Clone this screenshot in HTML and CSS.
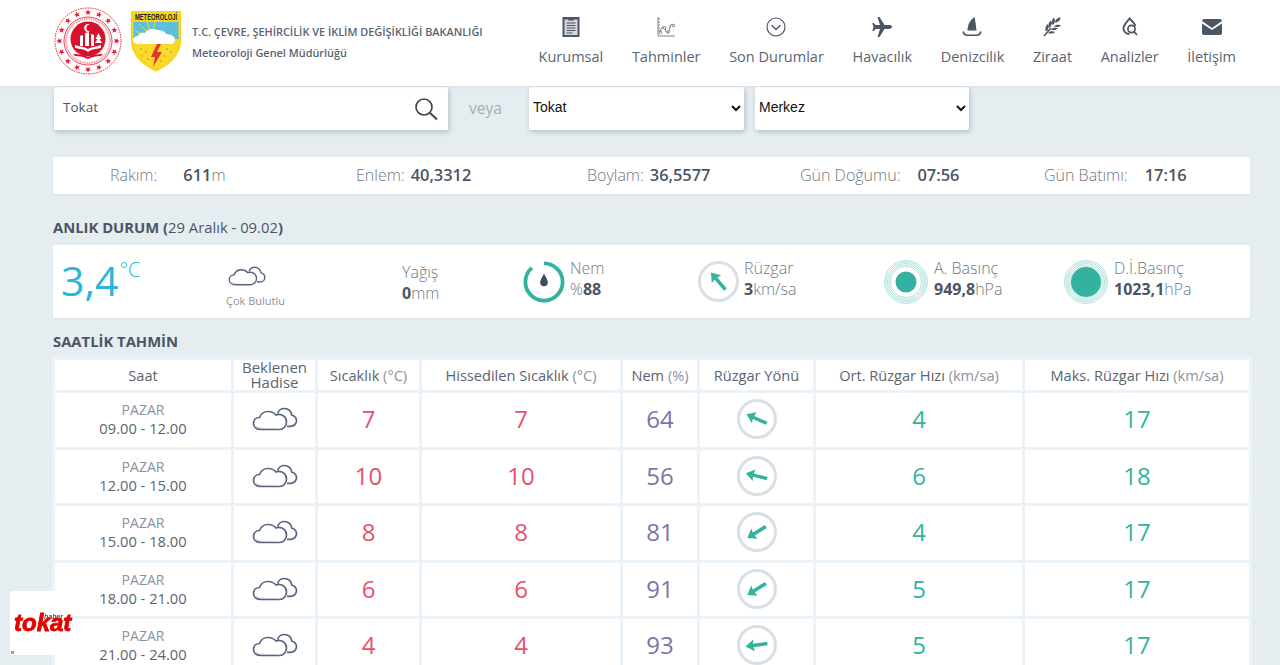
FILE: index.html
```html
<!DOCTYPE html>
<html lang="tr">
<head>
<meta charset="utf-8">
<title>Meteoroloji Genel Müdürlüğü</title>
<link rel="stylesheet" href="styles.css">
</head>
<body>
<svg class="defs" width="0" height="0" aria-hidden="true">
  <defs>
    <symbol id="cloud" viewBox="0 0 46 24">
      <path d="M3 18c4 2.500 12 3.500 20 3-.5 1-1 1.500-2 1.500H9c-3 0-5-2-6-4.500z" fill="#e4e6ec"/>
      <path d="M9 22.500C4.500 22.500 1.500 20 1.500 16.500S4 10.500 7.500 10.500C9 6.500 12.500 4.500 16 4.500c3 0 6 1.200 8 3.500 1-.5 2-.6 3-.6 4.500 0 7.500 3.500 7.500 7.600 0 4-3 7.500-7 7.500z" fill="none" stroke="#596580" stroke-width="1.700"/>
      <path d="M25.500 6.500C26.500 3.500 29 1.500 32.500 1.500c4 0 7 3 7.200 6.500 2.500.8 4.800 3 4.800 5.800 0 3.200-2.800 5.500-6 5.500h-3.500" fill="none" stroke="#596580" stroke-width="1.700"/>
    </symbol>
    <symbol id="wind" viewBox="0 0 40 40">
      <circle cx="20" cy="20" r="18.500" fill="#fff" stroke="#d8dfe5" stroke-width="3"/>
    </symbol>
    <polygon id="star" points="0,-3.200 .9,-1 3.100,-1 1.300,.4 2,2.600 0,1.300 -2,2.600 -1.300,.4 -3.100,-1 -.9,-1" fill="#e01b34"/>
    <g id="arrow" fill="#33b39f">
      <polygon points="0,-11.500 6,-3 1.700,-3.800 1.700,10.500 -1.700,10.500 -1.700,-3.800 -6,-3"/>
    </g>
    <g id="rings" fill="none" stroke="#33b39f" stroke-width=".5" stroke-opacity=".7">
      <circle cx="22" cy="22" r="21.500"/>
      <circle cx="22" cy="22" r="20"/>
      <circle cx="22" cy="22" r="18.500"/>
      <circle cx="22" cy="22" r="17"/>
      <circle cx="22" cy="22" r="15.500"/>
    </g>
  </defs>
</svg>

<header class="topbar">
  <div class="brand">
    <svg class="seal" viewBox="0 0 68 68" width="68" height="68" role="img" aria-label="Bakanlık amblemi">
      <circle cx="34" cy="34" r="33" fill="#fff" stroke="#e01b34" stroke-width="1" stroke-dasharray="1.500 1"/>
      <circle cx="34" cy="34" r="24" fill="none" stroke="#e01b34" stroke-width=".8"/>
      <circle cx="34" cy="34" r="22" fill="none" stroke="#ef8c98" stroke-width="2" stroke-dasharray="1 .8"/>
      <g transform="translate(34 34)">
        <use href="#star" transform="rotate(0) translate(0 -28.500)"/>
        <use href="#star" transform="rotate(22.500) translate(0 -28.500)"/>
        <use href="#star" transform="rotate(45) translate(0 -28.500)"/>
        <use href="#star" transform="rotate(67.500) translate(0 -28.500)"/>
        <use href="#star" transform="rotate(90) translate(0 -28.500)"/>
        <use href="#star" transform="rotate(112.500) translate(0 -28.500)"/>
        <use href="#star" transform="rotate(135) translate(0 -28.500)"/>
        <use href="#star" transform="rotate(157.500) translate(0 -28.500)"/>
        <use href="#star" transform="rotate(180) translate(0 -28.500)"/>
        <use href="#star" transform="rotate(202.500) translate(0 -28.500)"/>
        <use href="#star" transform="rotate(225) translate(0 -28.500)"/>
        <use href="#star" transform="rotate(247.500) translate(0 -28.500)"/>
        <use href="#star" transform="rotate(270) translate(0 -28.500)"/>
        <use href="#star" transform="rotate(292.500) translate(0 -28.500)"/>
        <use href="#star" transform="rotate(315) translate(0 -28.500)"/>
        <use href="#star" transform="rotate(337.500) translate(0 -28.500)"/>
      </g>
      <circle cx="34" cy="32" r="17.500" fill="#d8122c"/>
      <path d="M36 17.500a4 4 0 1 0 0 7 3.200 3.200 0 1 1 0-7z" fill="#fff"/>
      <path d="M26 39V29l3-1v11zM31 39V26l4-1v14zM37 39V27l3 1v11z" fill="#fff"/>
      <path d="M44.500 26l-3 6h2l-2.500 4h7l-2.500-4h2z" fill="#fff"/>
      <path d="M21 38c6 2 10 2 13 4 3-2 8-2 13-4v3c-5 1-10 1-13 4-3-3-8-3-13-4z" fill="#fff"/>
      <path d="M19 47c6 0 11 1 15 3 4-2 9-3 15-3l-2 2c-5 0-9 1-13 3-4-2-8-3-13-3z" fill="#d8122c"/>
    </svg>
    <svg class="shield" viewBox="0 0 50 61" width="50" height="61" role="img" aria-label="Meteoroloji amblemi">
      <path d="M0 0H50V30C50 45 37 55 25 60.500 13 55 0 45 0 30z" fill="#f7d51d"/>
      <path d="M2.500 11H47.500V28H2.500z" fill="#5cbfdc"/>
      <path d="M3 29H47V31C47 44 36 52 25 57 14 52 3 44 3 31z" fill="#fbd92a"/>
      <g stroke="#f7d51d" stroke-width="1"><path d="M18 22 8 13M19 20 16 11M22 20 24 11M15 24 4 20"/></g>
      <circle cx="20" cy="25" r="6" fill="#e0392b"/>
      <path d="M8 33c-4 0-6-2-6-4s2-4 5-4c1-3 4-4 7-3 2-4 8-5 12-3 4 0 8 1 9 4 4 0 9 2 9 6 0 3-3 4-6 4z" fill="#fff"/>
      <path d="M26 33 20 46h4l-2 10 9-15h-5l4-8z" fill="#e0392b"/>
      <g fill="#9c8f2a"><circle cx="10" cy="38" r=".8"/><circle cx="15" cy="41" r=".8"/><circle cx="11" cy="45" r=".8"/><circle cx="17" cy="48" r=".8"/><circle cx="36" cy="38" r=".8"/><circle cx="40" cy="41" r=".8"/><circle cx="34" cy="45" r=".8"/><circle cx="30" cy="50" r=".8"/></g>
      <text class="shield-text" transform="translate(25 9) scale(1 1.500)" text-anchor="middle">METEOROLOJİ</text>
    </svg>
    <div class="brand-text">
      <div class="brand-line">T.C. ÇEVRE, ŞEHİRCİLİK VE İKLİM DEĞİŞİKLİĞİ BAKANLIĞI</div>
      <div class="brand-line">Meteoroloji Genel Müdürlüğü</div>
    </div>
  </div>
  <nav class="nav">
    <a class="nav-item">
      <svg class="nav-icon" viewBox="0 0 20 20"><path d="M1.500 0H18.500V20H1.500z" fill="#4b5564"/><path d="M3.500 2.500H16.500V18H3.500z" fill="#d5d8dd"/><path d="M7 0h6v3.500H7z" fill="#4b5564"/><path d="M5.500 6h9M5.500 8.500h9M5.500 11h9M5.500 13.500h9M5.500 16h6" stroke="#4b5564" stroke-width="1.100"/></svg>
      <span>Kurumsal</span>
    </a>
    <a class="nav-item">
      <svg class="nav-icon" viewBox="0 0 20 20"><path d="M2 0V19H19" fill="none" stroke="#7a828e" stroke-width="1"/><path d="M2 2h2M2 5h2M2 8h2M2 11h2M2 14h2" stroke="#7a828e" stroke-width="1"/><path d="M4 15.500C6 8 8 9 9.500 13.500S13 15 14 10.500 16 8 18 8" fill="none" stroke="#5b6470" stroke-width="1"/><circle cx="8.500" cy="11" r="1.400" fill="#fff" stroke="#5b6470" stroke-width=".8"/><circle cx="4.500" cy="15.500" r="1.200" fill="#fff" stroke="#5b6470" stroke-width=".8"/><circle cx="12" cy="15" r="1.300" fill="#fff" stroke="#5b6470" stroke-width=".8"/><circle cx="17.500" cy="8.500" r="1.300" fill="#fff" stroke="#5b6470" stroke-width=".8"/></svg>
      <span>Tahminler</span>
    </a>
    <a class="nav-item">
      <svg class="nav-icon" viewBox="0 0 20 20"><circle cx="10" cy="10" r="9" fill="none" stroke="#4b5564" stroke-width="1.200"/><path d="M5.500 8 10 12.500 14.500 8" fill="none" stroke="#4b5564" stroke-width="1.300"/></svg>
      <span>Son Durumlar</span>
    </a>
    <a class="nav-item">
      <svg class="nav-icon" viewBox="0 0 20 20"><path d="M20 9.500C20 8.500 18.500 8 17 8H12.500L7.500 0H5.500L8 8H3.500L1.800 6H.3l1.200 4-1.200 4h1.500l1.700-2H8L5.500 20h2l5-8H17c1.500 0 3-1 3-2.500z" fill="#4b5564"/></svg>
      <span>Havacılık</span>
    </a>
    <a class="nav-item">
      <svg class="nav-icon" viewBox="0 0 20 20"><path d="M5.500 13.500C5.500 8 8 3 12.500 0 13.500 5 14 9 14.500 13.500z" fill="#4b5564"/><path d="M1.200 14.500c.5 2.500 2 3.700 4 3.700h9.600c2 0 3.500-1.200 4-3.700" fill="none" stroke="#4b5564" stroke-width="1.600"/></svg>
      <span>Denizcilik</span>
    </a>
    <a class="nav-item">
      <svg class="nav-icon" viewBox="0 0 20 20"><path d="M2 19 9 11" stroke="#4b5564" stroke-width="1.600"/><path d="M3.500 14c-.5-3 .5-5.500 2-7 1.500 2.500 1 5-.5 7zM6 16c3 1 5.500.5 7-1-2.500-1.500-5-1-7 1zM6.500 10.500C6 7.500 7 5 8.500 3.500c1.500 2.500 1 5-.5 7zM9 12.500c3 1 5.500.5 7-1-2.500-1.500-5-1-7 1zM9.500 7.500C9 4.500 10.500 2 12 .5c1.500 2.500 1 5-.5 7zM12 9.500c3 1 5.500.5 7-1-2.500-1.500-5-1-7 1zM13 5.500c0-2.500 2-4.500 5.500-5.500 0 3-2 5.500-5.500 5.500z" fill="#4b5564"/></svg>
      <span>Ziraat</span>
    </a>
    <a class="nav-item">
      <svg class="nav-icon" viewBox="0 0 20 20"><path d="M9.500 17C6 17 3.500 14.500 3.500 11.500 3.500 8 7 5 9.500 1.500 12 4 14.500 6 15.500 9" fill="none" stroke="#4b5564" stroke-width="1.900"/><circle cx="11.500" cy="12" r="3.600" fill="#fff" stroke="#4b5564" stroke-width="1.700"/><path d="M14 14.500l3 3.500" stroke="#4b5564" stroke-width="1.800"/></svg>
      <span>Analizler</span>
    </a>
    <a class="nav-item">
      <svg class="nav-icon" viewBox="0 0 20 20"><path d="M2 2H18c1 0 2 1 2 2L10 11 0 4c0-1 1-2 2-2zM0 6.500 10 13 20 6.500V16c0 1-1 2-2 2H2c-1 0-2-1-2-2z" fill="#4b5564"/></svg>
      <span>İletişim</span>
    </a>
  </nav>
</header>

<main class="page">
  <section class="search-row">
    <div class="search-box">
      <span class="search-value">Tokat</span>
      <svg class="search-icon" viewBox="0 0 24 24" width="24" height="24"><circle cx="10" cy="10" r="8" fill="none" stroke="#3f4650" stroke-width="1.700"/><path d="M15.800 15.800 23 22.500" stroke="#3f4650" stroke-width="2"/></svg>
    </div>
    <span class="or">veya</span>
    <select class="pick pick-il"><option>Tokat</option></select>
    <select class="pick pick-ilce"><option>Merkez</option></select>
  </section>

  <section class="info-bar">
    <div><span class="info-label wide">Rakım:</span><b>611</b><span class="unit">m</span></div>
    <div><span class="info-label">Enlem:</span><b>40,3312</b></div>
    <div><span class="info-label">Boylam:</span><b>36,5577</b></div>
    <div><span class="info-label mid">Gün Doğumu:</span><b>07:56</b></div>
    <div><span class="info-label mid">Gün Batımı:</span><b>17:16</b></div>
  </section>

  <h2 class="title first">ANLIK DURUM <span class="title-sub">(<span class="title-light">29 Aralık - 09.02</span>)</span></h2>

  <section class="now">
    <div class="temp"><span class="temp-num">3,4</span><span class="temp-unit">°C</span></div>
    <div class="sky">
      <svg class="sky-icon" width="38" height="20"><use href="#cloud"/></svg>
      <span class="sky-text">Çok Bulutlu</span>
    </div>
    <div class="stat stat-rain"><span class="stat-name">Yağış</span><span class="stat-val"><b>0</b>mm</span></div>
    <div class="stat-wrap">
      <svg class="gauge" viewBox="0 0 44 44" width="42" height="42">
        <circle cx="22" cy="22" r="19.500" fill="none" stroke="#33b39f" stroke-width="4" stroke-dasharray="108 123" transform="rotate(-90 22 22)"/>
        <path d="M22 13c-2 4-4 6.500-4 9.500a4 4 0 0 0 8 0c0-3-2-5.500-4-9.500z" fill="#3f4a5c"/>
      </svg>
      <div class="stat"><span class="stat-name">Nem</span><span class="stat-val">%<b>88</b></span></div>
    </div>
    <div class="stat-wrap">
      <svg class="gauge" viewBox="0 0 40 40" width="41" height="41">
        <circle cx="20" cy="20" r="18.500" fill="#fff" stroke="#d8dfe5" stroke-width="3"/>
        <use href="#arrow" transform="translate(20 20) rotate(-40)"/>
      </svg>
      <div class="stat"><span class="stat-name">Rüzgar</span><span class="stat-val"><b>3</b>km/sa</span></div>
    </div>
    <div class="stat-wrap">
      <svg class="gauge" viewBox="0 0 44 44" width="44" height="44"><use href="#rings"/><circle cx="22" cy="22" r="10.500" fill="#33b39f"/></svg>
      <div class="stat"><span class="stat-name">A. Basınç</span><span class="stat-val"><b>949,8</b>hPa</span></div>
    </div>
    <div class="stat-wrap">
      <svg class="gauge" viewBox="0 0 44 44" width="44" height="44"><use href="#rings"/><circle cx="22" cy="22" r="15" fill="#33b39f"/></svg>
      <div class="stat"><span class="stat-name">D.İ.Basınç</span><span class="stat-val"><b>1023,1</b>hPa</span></div>
    </div>
  </section>

  <h2 class="title second">SAATLİK TAHMİN</h2>

  <table class="hours">
    <colgroup>
      <col class="c1"><col class="c2"><col class="c3"><col class="c4"><col class="c5"><col class="c6"><col class="c7"><col class="c8">
    </colgroup>
    <thead>
      <tr>
        <th>Saat</th>
        <th class="two-line">Beklenen Hadise</th>
        <th>Sıcaklık <span class="th-unit">(°C)</span></th>
        <th>Hissedilen Sıcaklık <span class="th-unit">(°C)</span></th>
        <th>Nem <span class="th-unit">(%)</span></th>
        <th>Rüzgar Yönü</th>
        <th>Ort. Rüzgar Hızı <span class="th-unit">(km/sa)</span></th>
        <th>Maks. Rüzgar Hızı <span class="th-unit">(km/sa)</span></th>
      </tr>
    </thead>
    <tbody>
      <tr>
        <td><span class="day">PAZAR</span><span class="time">09.00 - 12.00</span></td>
        <td><svg class="cloud" width="46" height="24"><use href="#cloud"/></svg></td>
        <td class="red">7</td><td class="red">7</td><td class="purple">64</td>
        <td><svg class="dir" viewBox="0 0 40 40" width="40" height="40"><use href="#wind"/><use href="#arrow" transform="translate(20 20) rotate(-66)"/></svg></td>
        <td class="green">4</td><td class="green">17</td>
      </tr>
      <tr>
        <td><span class="day">PAZAR</span><span class="time">12.00 - 15.00</span></td>
        <td><svg class="cloud" width="46" height="24"><use href="#cloud"/></svg></td>
        <td class="red">10</td><td class="red">10</td><td class="purple">56</td>
        <td><svg class="dir" viewBox="0 0 40 40" width="40" height="40"><use href="#wind"/><use href="#arrow" transform="translate(20 20) rotate(-76)"/></svg></td>
        <td class="green">6</td><td class="green">18</td>
      </tr>
      <tr>
        <td><span class="day">PAZAR</span><span class="time">15.00 - 18.00</span></td>
        <td><svg class="cloud" width="46" height="24"><use href="#cloud"/></svg></td>
        <td class="red">8</td><td class="red">8</td><td class="purple">81</td>
        <td><svg class="dir" viewBox="0 0 40 40" width="40" height="40"><use href="#wind"/><use href="#arrow" transform="translate(20 20) rotate(-122)"/></svg></td>
        <td class="green">4</td><td class="green">17</td>
      </tr>
      <tr>
        <td><span class="day">PAZAR</span><span class="time">18.00 - 21.00</span></td>
        <td><svg class="cloud" width="46" height="24"><use href="#cloud"/></svg></td>
        <td class="red">6</td><td class="red">6</td><td class="purple">91</td>
        <td><svg class="dir" viewBox="0 0 40 40" width="40" height="40"><use href="#wind"/><use href="#arrow" transform="translate(20 20) rotate(-122)"/></svg></td>
        <td class="green">5</td><td class="green">17</td>
      </tr>
      <tr>
        <td><span class="day">PAZAR</span><span class="time">21.00 - 24.00</span></td>
        <td><svg class="cloud" width="46" height="24"><use href="#cloud"/></svg></td>
        <td class="red">4</td><td class="red">4</td><td class="purple">93</td>
        <td><svg class="dir" viewBox="0 0 40 40" width="40" height="40"><use href="#wind"/><use href="#arrow" transform="translate(20 20) rotate(-98)"/></svg></td>
        <td class="green">5</td><td class="green">17</td>
      </tr>
    </tbody>
  </table>
</main>

<aside class="ad">
  <span class="ad-sub">haber</span>
  <span class="ad-name">tokat</span>
  <i class="ad-mark"></i>
</aside>
</body>
</html>
```
FILE: styles.css
```css
html, body {
  margin: 0;
  padding: 0;
  height: 665px;
  overflow: hidden;
}
body {
  background: #e5edf1;
  font-family: "Open Sans", "Noto Sans", sans-serif;
  color: #4b5564;
}
.defs {
  display: block;
  height: 0;
}
.topbar {
  height: 86px;
  background: #fff;
  display: flex;
  align-items: flex-start;
  box-shadow: 0 1px 4px rgba(60, 80, 100, .08);
  padding: 0 44px 0 54px;
  position: relative;
  z-index: 2;
}
.brand {
  display: flex;
  align-items: flex-start;
}
.seal {
  margin-top: 7px;
  flex: none;
}
.shield {
  margin: 11px 0 0 9px;
  flex: none;
}
.shield-text {
  font-family: "Liberation Sans", sans-serif;
  font-size: 5.800px;
  font-weight: 700;
  fill: #222;
}
.brand-text {
  margin: 21px 0 0 11px;
  font-size: 10.900px;
  font-weight: 600;
  color: #5b6470;
  line-height: 21px;
  white-space: nowrap;
}
.nav {
  margin-left: auto;
  display: flex;
  gap: 28.650px;
}
.nav-item {
  display: flex;
  flex-direction: column;
  align-items: center;
  font-size: 14.500px;
  color: #5b6470;
  white-space: nowrap;
}
.nav-icon {
  width: 20px;
  height: 20px;
  margin-top: 17px;
  margin-bottom: 10px;
}
.page {
  padding: 1px 30px 0 53px;
}
.search-row {
  display: flex;
  align-items: flex-start;
  height: 43px;
}
.search-box {
  width: 394px;
  height: 43px;
  box-sizing: border-box;
  padding: 0 10px 0 9px;
  background: #fff;
  display: flex;
  align-items: center;
  justify-content: space-between;
  box-shadow: 1px 2px 5px rgba(60, 80, 100, .3);
  font-size: 13.500px;
  color: #4b5564;
  margin-left: 1px;
}
.search-value {
  margin-top: -4px;
}
.or {
  width: 33px;
  margin: 10px 27px 0 21px;
  font-size: 15.500px;
  color: #a3adb8;
}
.pick {
  height: 43px;
  padding-bottom: 3px;
  background: #fff;
  border: 0;
  border-radius: 2px;
  font-family: "Liberation Sans", Arial, sans-serif;
  font-size: 14px;
  color: #111;
  box-shadow: 1px 2px 5px rgba(60, 80, 100, .3);
}
.pick-il {
  width: 215px;
  margin-right: 11px;
}
.pick-ilce {
  width: 214px;
}
.info-bar {
  margin-top: 27px;
  height: 37px;
  box-sizing: border-box;
  padding-bottom: 2px;
  background: #fff;
  display: grid;
  grid-template-columns: 246px 231px 213px 244px 1fr;
  align-items: center;
  padding-left: 57px;
  width: 1197px;
  font-size: 16px;
  font-weight: 300;
  white-space: nowrap;
  box-shadow: 0 1px 2px rgba(60, 80, 100, .08);
}
.info-bar b {
  font-size: 16.400px;
  font-weight: 600;
  color: #4b5564;
}
.info-label {
  color: #6f7884;
  margin-right: 6px;
}
.info-label.wide {
  margin-right: 26px;
}
.info-label.mid {
  margin-right: 17px;
}
.unit {
  color: #6f7884;
}
.title {
  margin: 0;
  font-size: 14.800px;
  font-weight: 700;
  color: #4b5564;
  line-height: 20px;
}
.title.first {
  margin-top: 23px;
}
.title.second {
  margin-top: 13px;
  height: 20px;
}
.title-light {
  font-weight: 400;
}
.now {
  margin-top: 8px;
  height: 73px;
  width: 1189px;
  padding-left: 8px;
  background: #fff;
  border-radius: 2px;
  display: grid;
  grid-template-columns: 165px 176px 121px 175px 186px 180px 1fr;
  align-items: center;
  box-shadow: 0 1px 2px rgba(60, 80, 100, .08);
}
.temp {
  display: flex;
  align-items: flex-start;
  color: #29b6d8;
  margin-top: -3px;
}
.temp-num {
  font-size: 41px;
  line-height: 60px;
}
.temp-unit {
  font-size: 20px;
  font-weight: 300;
  line-height: 40px;
  margin-left: 1px;
}
.sky {
  display: flex;
  flex-direction: column;
  align-items: flex-start;
  padding-top: 12px;
}
.sky-icon {
  margin: 0 0 7px 2px;
}
.sky-text {
  font-size: 11px;
  line-height: 16px;
  color: #8a939e;
}
.stat-wrap {
  display: flex;
  align-items: center;
  gap: 5px;
}
.stat {
  display: flex;
  flex-direction: column;
  font-size: 16px;
  font-weight: 300;
  line-height: 21px;
  color: #6f7884;
  white-space: nowrap;
}
.stat-rain {
  margin-top: 2px;
}
.stat-wrap .stat {
  margin-bottom: 5px;
}
.stat b {
  font-weight: 700;
  color: #4b5564;
}
.gauge {
  flex: none;
}
.stat-wrap:nth-child(6) .stat,
.stat-wrap:nth-child(7) .stat {
  margin-left: 1px;
}
.hours {
  margin: 6px 0 0 -1px;
  table-layout: fixed;
  width: 1200px;
  border-collapse: separate;
  border-spacing: 3px;
  background: #ebf3f8;
}
.c1 { width: 176px; }
.c2 { width: 81px; }
.c3 { width: 101px; }
.c4 { width: 198px; }
.c5 { width: 74px; }
.c6 { width: 113px; }
.c7 { width: 206px; }
.c8 { width: 224px; }
.hours th,
.hours td {
  background: #fff;
  padding: 0;
  text-align: center;
}
.hours th {
  height: 30px;
  font-size: 14.600px;
  font-weight: 400;
  color: #5b6470;
  white-space: nowrap;
}
.hours th.two-line {
  white-space: normal;
  font-size: 15px;
  line-height: 15px;
}
.th-unit {
  color: #8a939e;
}
.hours td {
  height: 53.500px;
  box-sizing: border-box;
  padding-bottom: 1px;
  font-size: 24px;
  vertical-align: middle;
}
.hours td.red,
.hours td.purple,
.hours td.green {
  padding-bottom: 2px;
}
.day,
.time {
  display: block;
  line-height: 19px;
}
.day {
  font-size: 14px;
  color: #8a939e;
}
.time {
  font-size: 14.700px;
  color: #5b6470;
}
.cloud {
  display: block;
  margin: 0 auto;
}
.dir {
  display: block;
  margin: 0 auto;
}
.red { color: #e8506c; }
.purple { color: #7f72aa; }
.green { color: #33b39f; }
.ad {
  position: fixed;
  left: 10px;
  top: 591px;
  width: 62px;
  height: 64px;
  background: #fff;
  z-index: 3;
}
.ad-name {
  position: absolute;
  left: 4px;
  top: 20px;
  font-family: "Liberation Sans", sans-serif;
  font-size: 24px;
  line-height: 24px;
  font-weight: 700;
  font-style: italic;
  color: #e60000;
  -webkit-text-stroke: .8px #e60000;
}
.ad-sub {
  position: absolute;
  left: 34px;
  top: 22px;
  font-family: "Liberation Sans", sans-serif;
  font-size: 7px;
  line-height: 7px;
  font-style: italic;
  font-weight: 700;
  color: #555;
}
.ad-mark {
  position: absolute;
  left: 1px;
  top: 60px;
  width: 3px;
  height: 3px;
  background: #d9848c;
}
```
